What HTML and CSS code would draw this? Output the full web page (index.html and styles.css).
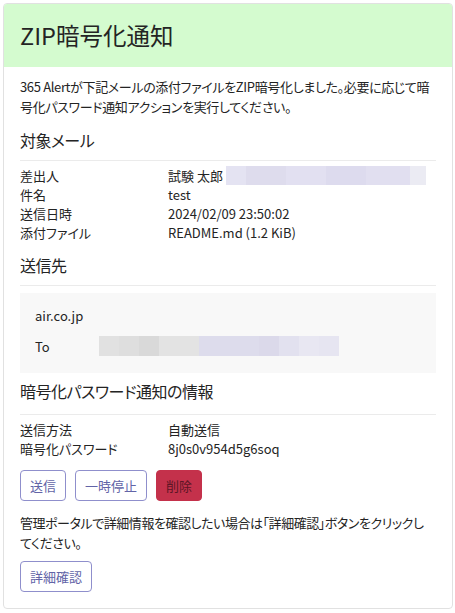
FILE: index.html
```html
<!DOCTYPE html>
<html lang="ja">
<head>
<meta charset="utf-8">
<link rel="stylesheet" href="styles.css">
</head>
<body>
<div class="card">
  <div class="card-header"><h1 class="title">ZIP暗号化通知</h1></div>
  <div class="card-body">
    <p class="para">365 Alertが下記メールの添付ファイルをZIP暗号化しました。必要に応じて暗号化パスワード通知アクションを実行してください。</p>

    <h2 class="section-title">対象メール</h2>
    <div class="facts">
      <div class="fact-label">差出人</div>
      <div class="fact-value">試験 太郎<span class="redact redact-sender"><i class="r1"></i><i class="r2"></i><i class="r3"></i><i class="r4"></i><i class="r5"></i><i class="r6"></i></span></div>
      <div class="fact-label">件名</div>
      <div class="fact-value">test</div>
      <div class="fact-label">送信日時</div>
      <div class="fact-value">2024/02/09 23:50:02</div>
      <div class="fact-label">添付ファイル</div>
      <div class="fact-value">README.md (1.2 KiB)</div>
    </div>

    <h2 class="section-title">送信先</h2>
    <div class="recipients">
      <div class="domain">air.co.jp</div>
      <div class="to-row">
        <span class="to-label">To</span>
        <span class="redact redact-to"><i class="g1"></i><i class="g2"></i><i class="g3"></i><i class="g4"></i><i class="l1"></i><i class="l2"></i><i class="l3"></i><i class="l4"></i><i class="l5"></i></span>
      </div>
    </div>

    <h2 class="section-title section-title-tight">暗号化パスワード通知の情報</h2>
    <div class="facts">
      <div class="fact-label">送信方法</div>
      <div class="fact-value">自動送信</div>
      <div class="fact-label">暗号化パスワード</div>
      <div class="fact-value">8j0s0v954d5g6soq</div>
    </div>

    <div class="actions">
      <button class="btn">送信</button>
      <button class="btn">一時停止</button>
      <button class="btn btn-danger">削除</button>
    </div>

    <p class="para para-bottom">管理ポータルで詳細情報を確認したい場合は「詳細確認」ボタンをクリックしてください。</p>

    <div class="actions actions-last">
      <button class="btn">詳細確認</button>
    </div>
  </div>
</div>
</body>
</html>
```

FILE: styles.css
```css
* { box-sizing: border-box; }

body {
  margin: 3px 2px 0 3px;
  font-family: "Noto Sans CJK JP", "Noto Sans", sans-serif;
  font-feature-settings: "palt";
  color: #242424;
  background: #ffffff;
  font-size: 13px;
}

.card {
  border: 1px solid #e1e1e1;
  border-radius: 4px;
  overflow: hidden;
  background: #fff;
}

.card-header {
  background: #d4fbcf;
  height: 63px;
  padding: 0 16px;
  display: flex;
  align-items: center;
}

.title {
  margin: 0;
  font-size: 23.5px;
  font-weight: 400;
  line-height: 1;
}

.card-body {
  padding: 10px 16px 16px 16px;
}

.para {
  margin: 0;
  line-height: 20px;
  font-size: 13px;
  letter-spacing: -0.35px;
}

.section-title {
  margin: 11px 0 0 0;
  font-size: 16px;
  font-weight: 400;
  line-height: 24px;
  letter-spacing: -0.5px;
  padding-bottom: 8px;
  border-bottom: 1px solid #ebebeb;
}

.section-title-tight {
  margin-top: 6px;
  padding-bottom: 11px;
}

.facts {
  display: grid;
  grid-template-columns: 148px 1fr;
  margin-top: 5px;
  line-height: 19px;
}

.fact-value { display: flex; align-items: center; }

.redact {
  display: inline-flex;
  height: 19px;
}
.redact i { display: block; height: 100%; }

.redact-sender { margin-left: 3px; }
.redact-sender .r1 { width: 20px; background: #e4e3f2; }
.redact-sender .r2 { width: 40px; background: #dedced; }
.redact-sender .r3 { width: 40px; background: #e2e0f1; }
.redact-sender .r4 { width: 40px; background: #dddbee; }
.redact-sender .r5 { width: 44px; background: #e1dff0; }
.redact-sender .r6 { width: 16px; background: #ebebf3; }

.recipients {
  background: #f8f8f8;
  margin-top: 7px;
  padding: 13px 15px 17px 15px;
}

.domain { line-height: 20px; }

.to-row {
  display: flex;
  align-items: center;
  margin-top: 10px;
}
.to-label { width: 64px; }
.redact-to { height: 20px; }
.redact-to .g1 { width: 20px; background: #e1e1e1; }
.redact-to .g2 { width: 20px; background: #dedede; }
.redact-to .g3 { width: 20px; background: #d9d9d9; }
.redact-to .g4 { width: 40px; background: #e3e3e3; }
.redact-to .l1 { width: 60px; background: #dddcec; }
.redact-to .l2 { width: 20px; background: #dbd9ea; }
.redact-to .l3 { width: 20px; background: #e2e1ef; }
.redact-to .l4 { width: 20px; background: #e8e7f2; }
.redact-to .l5 { width: 20px; background: #e6e5f1; }

.actions {
  display: flex;
  gap: 9px;
  margin-top: 12px;
}

.actions-last { margin-top: 8px; }

.btn {
  font-family: inherit;
  font-feature-settings: "palt";
  font-size: 13px;
  height: 31px;
  padding: 0 9px;
  border: 1px solid #8f8fcc;
  border-radius: 4px;
  background: #fff;
  color: #6264a7;
  cursor: pointer;
}

.btn-danger {
  background: #c4314b;
  border-color: #c4314b;
  color: #5c1625;
}

.para-bottom {
  margin-top: 12px;
  letter-spacing: -0.45px;
  max-width: 410px;
}
```
